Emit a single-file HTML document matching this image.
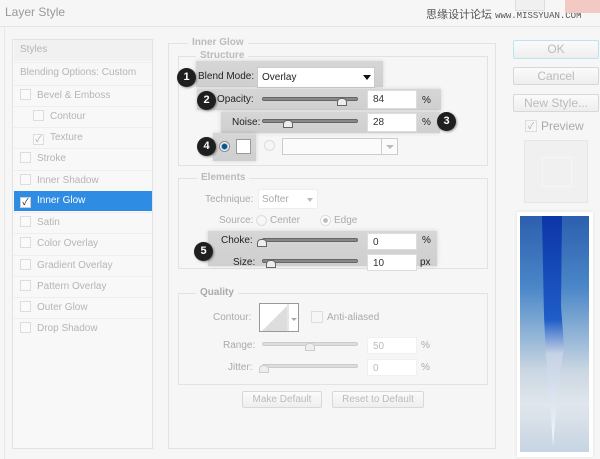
<!DOCTYPE html>
<html><head><meta charset="utf-8"><style>
*{margin:0;padding:0;box-sizing:border-box}
body{width:600px;height:459px;overflow:hidden;background:#f6f6f6;font-family:"Liberation Sans","Noto Sans CJK SC",sans-serif;font-size:10px;color:#aaa;position:relative}
.a{position:absolute}
.t{position:absolute;white-space:nowrap;line-height:12px}
.box{position:absolute;border:1px solid #e2e2e2}
.leg{position:absolute;background:#f6f6f6;padding:0 4px;font-weight:bold;color:#bbb;font-size:10px;line-height:12px}
.row{position:absolute;left:1px;width:138px;height:21px;border-top:1px solid #eee;line-height:20px;padding-left:6px;color:#b5b5b5}
.cb{display:inline-block;width:11px;height:11px;border:1px solid #ddd;background:#fafafa;vertical-align:-2px;margin-right:6px;font-size:9px;line-height:9px;text-align:center;color:#aaa}
.hl{position:absolute;background:linear-gradient(#d6d6d6,#cfcfcf);box-shadow:0 0 4px rgba(0,0,0,.15)}
.badge{position:absolute;width:19px;height:19px;border-radius:50%;background:#1f1f1f;color:#fff;font-weight:bold;font-size:11px;text-align:center;line-height:19px;box-shadow:1px 1px 2px rgba(0,0,0,.4)}
.sl{position:absolute;height:4px;border-radius:2px;background:#888;border:1px solid #666}
.sl.d{background:#ddd;border-color:#ccc}
.th{position:absolute;width:10px;height:8px;border:1px solid #666;border-radius:4px 4px 0 0;background:#eee}
.th.d{border-color:#ccc}
.inp{position:absolute;background:#fff;border:1px solid #ddd;color:#333;padding-left:5px;line-height:17px;font-size:10px}
.btn{position:absolute;border:1px solid #d8d8d8;border-radius:2px;background:linear-gradient(#fbfbfb,#eee);color:#bbb;text-align:center}
.lb{color:#222}
</style></head><body>
<div class="t" style="left:5px;top:5px;font-size:12px;color:#999;line-height:14px">Layer Style</div>
<div class="t" style="left:426px;top:9px;font-size:11px;color:#555">思缘设计论坛 <span style="font-size:9px;font-family:'Liberation Mono',monospace">www.MISSYUAN.COM</span></div>
<div class="a" style="left:515px;top:0;width:30px;height:11px;border:1px solid #ddd;border-top:none;background:#f0f0f0"></div>
<div class="a" style="left:565px;top:0;width:35px;height:13px;background:#f3c9c4"></div>
<div class="a" style="left:0;top:26px;width:600px;height:1px;background:#e4e4e4"></div>
<div class="a" style="left:4px;top:27px;width:1px;height:432px;background:#e8e8e8"></div>

<!-- left panel -->
<div class="box" style="left:12px;top:39px;width:141px;height:410px;background:#f8f8f8">
 <div class="row" style="top:0;border:none;background:#f1f1f1">Styles</div>
 <div class="row" style="top:22px;background:#f7f7f7">Blending Options: Custom</div>
 <div class="row" style="top:45px"><span class="cb"></span>Bevel &amp; Emboss</div>
 <div class="row" style="top:66px;padding-left:19px"><span class="cb"></span>Contour</div>
 <div class="row" style="top:87px;padding-left:19px"><span class="cb">✓</span>Texture</div>
 <div class="row" style="top:108px"><span class="cb"></span>Stroke</div>
 <div class="row" style="top:130px"><span class="cb"></span>Inner Shadow</div>
 <div class="row" style="top:151px;background:#2f8ce3;color:#fff;border:none;height:20px"><span class="cb" style="background:#fff;color:#113;border-color:#ccc">✓</span>Inner Glow</div>
 <div class="row" style="top:172px"><span class="cb"></span>Satin</div>
 <div class="row" style="top:193px"><span class="cb"></span>Color Overlay</div>
 <div class="row" style="top:215px"><span class="cb"></span>Gradient Overlay</div>
 <div class="row" style="top:236px"><span class="cb"></span>Pattern Overlay</div>
 <div class="row" style="top:257px"><span class="cb"></span>Outer Glow</div>
 <div class="row" style="top:278px"><span class="cb"></span>Drop Shadow</div>
</div>

<!-- main -->
<div class="box" style="left:168px;top:43px;width:328px;height:406px"></div>
<div class="leg" style="left:188px;top:37px">Inner Glow</div>
<div class="box" style="left:178px;top:56px;width:310px;height:110px"></div>
<div class="leg" style="left:196px;top:50px">Structure</div>

<div class="hl" style="left:196px;top:61px;width:187px;height:26px"></div>
<div class="t lb" style="left:198px;top:71px">Blend Mode:</div>
<div class="a" style="left:257px;top:67px;width:118px;height:21px;background:#fff;border:1px solid #ccc"></div>
<div class="t lb" style="left:262px;top:72px">Overlay</div>
<div class="a" style="left:363px;top:75px;border:4px solid transparent;border-top:5px solid #111"></div>
<div class="badge" style="left:177px;top:68px">1</div>

<div class="hl" style="left:197px;top:89px;width:244px;height:21px"></div>
<div class="t lb" style="left:217px;top:94px">Opacity:</div>
<div class="sl" style="left:262px;top:97px;width:96px"></div>
<div class="th" style="left:337px;top:98px"></div>
<div class="inp" style="left:367px;top:90px;width:50px;height:19px">84</div>
<div class="t lb" style="left:422px;top:95px">%</div>
<div class="badge" style="left:197px;top:91px">2</div>

<div class="hl" style="left:221px;top:112px;width:219px;height:21px"></div>
<div class="t lb" style="left:232px;top:117px">Noise:</div>
<div class="sl" style="left:262px;top:119px;width:96px"></div>
<div class="th" style="left:283px;top:120px"></div>
<div class="inp" style="left:367px;top:113px;width:50px;height:19px">28</div>
<div class="t lb" style="left:422px;top:117px">%</div>
<div class="badge" style="left:437px;top:112px">3</div>

<div class="hl" style="left:213px;top:133px;width:43px;height:28px"></div>
<div class="a" style="left:219px;top:141px;width:11px;height:11px;border-radius:50%;background:radial-gradient(#0a4f8f 35%,#7ab 45%,#fff 60%);border:1px solid #889"></div>
<div class="a" style="left:236px;top:139px;width:15px;height:15px;background:#fff;border:1px solid #999"></div>
<div class="badge" style="left:197px;top:137px">4</div>
<div class="a" style="left:264px;top:140px;width:11px;height:11px;border-radius:50%;border:1px solid #ddd"></div>
<div class="a" style="left:282px;top:138px;width:116px;height:17px;border:1px solid #ccc;background:#fbfbfb"></div>
<div class="a" style="left:381px;top:138px;width:1px;height:17px;background:#ccc"></div>
<div class="a" style="left:386px;top:145px;border:4px solid transparent;border-top:4px solid #bbb"></div>

<div class="box" style="left:178px;top:178px;width:310px;height:91px"></div>
<div class="leg" style="left:197px;top:172px">Elements</div>
<div class="t" style="left:205px;top:194px">Technique:</div>
<div class="a" style="left:258px;top:189px;width:60px;height:20px;background:#fff;border:1px solid #eee"></div>
<div class="t" style="left:262px;top:194px">Softer</div>
<div class="a" style="left:307px;top:198px;border:3px solid transparent;border-top:4px solid #bbb"></div>
<div class="t" style="left:219px;top:215px">Source:</div>
<div class="a" style="left:256px;top:215px;width:11px;height:11px;border-radius:50%;border:1px solid #ddd"></div>
<div class="t" style="left:270px;top:215px">Center</div>
<div class="a" style="left:320px;top:215px;width:11px;height:11px;border-radius:50%;border:1px solid #ddd;background:radial-gradient(#bbb 30%,#fff 45%)"></div>
<div class="t" style="left:334px;top:215px">Edge</div>

<div class="hl" style="left:208px;top:231px;width:229px;height:35px"></div>
<div class="t lb" style="left:221px;top:235px">Choke:</div>
<div class="sl" style="left:262px;top:238px;width:96px"></div>
<div class="th" style="left:257px;top:239px"></div>
<div class="inp" style="left:367px;top:233px;width:50px;height:17px">0</div>
<div class="t lb" style="left:422px;top:235px">%</div>
<div class="t lb" style="left:233px;top:257px">Size:</div>
<div class="sl" style="left:262px;top:259px;width:96px"></div>
<div class="th" style="left:266px;top:260px"></div>
<div class="inp" style="left:367px;top:254px;width:50px;height:17px">10</div>
<div class="t lb" style="left:420px;top:257px">px</div>
<div class="badge" style="left:194px;top:242px">5</div>

<div class="box" style="left:178px;top:293px;width:310px;height:92px"></div>
<div class="leg" style="left:196px;top:287px;color:#aaa">Quality</div>
<div class="t" style="left:213px;top:312px">Contour:</div>
<div class="a" style="left:259px;top:303px;width:40px;height:29px;border:1px solid #999;background:#fff;overflow:hidden">
<svg width="40" height="29"><polygon points="2,27 27,2 27,27" fill="#ddd"/><line x1="28" y1="0" x2="28" y2="29" stroke="#ccc"/><path d="M31 14l3 3 3-3z" fill="#aaa"/></svg></div>
<div class="a" style="left:311px;top:311px;width:12px;height:12px;border:1px solid #ddd"></div>
<div class="t" style="left:327px;top:312px">Anti-aliased</div>
<div class="t" style="left:223px;top:340px">Range:</div>
<div class="sl d" style="left:262px;top:342px;width:96px"></div>
<div class="th d" style="left:305px;top:343px"></div>
<div class="inp" style="left:367px;top:337px;width:50px;height:17px;color:#bbb;border-color:#f0f0f0">50</div>
<div class="t" style="left:421px;top:340px">%</div>
<div class="t" style="left:228px;top:362px">Jitter:</div>
<div class="sl d" style="left:262px;top:364px;width:96px"></div>
<div class="th d" style="left:259px;top:365px"></div>
<div class="inp" style="left:367px;top:359px;width:50px;height:17px;color:#bbb;border-color:#f0f0f0">0</div>
<div class="t" style="left:421px;top:362px">%</div>
<div class="btn" style="left:242px;top:391px;width:80px;height:17px;line-height:15px">Make Default</div>
<div class="btn" style="left:332px;top:391px;width:92px;height:17px;line-height:15px">Reset to Default</div>

<!-- right -->
<div class="btn" style="left:513px;top:40px;width:86px;height:19px;line-height:17px;font-size:12px;border-color:#bfe3ee">OK</div>
<div class="btn" style="left:513px;top:67px;width:86px;height:18px;line-height:16px;font-size:12px">Cancel</div>
<div class="btn" style="left:513px;top:94px;width:86px;height:18px;line-height:16px;font-size:12px">New Style...</div>
<div class="a" style="left:525px;top:120px;width:12px;height:12px;border:1px solid #ddd;font-size:9px;line-height:10px;text-align:center">✓</div>
<div class="t" style="left:541px;top:120px;font-size:12px;line-height:13px">Preview</div>
<div class="a" style="left:524px;top:140px;width:64px;height:63px;border:1px solid #e6e6e6;background:#f0f0f0"><div class="a" style="left:17px;top:16px;width:30px;height:30px;border:1px solid #f6f6f6"></div></div>
<div class="a" style="left:517px;top:212px;width:76px;height:245px;background:#fff;box-shadow:0 0 3px #e0e0e0"></div>
<div class="a" style="left:520px;top:216px;width:69px;height:236px;overflow:hidden;background:linear-gradient(#2c5fae 0%,#4a86c8 30%,#8fb3d6 50%,#c9d6e2 65%,#e1e6ec 80%,#c6d4e3 100%)">
<svg width="69" height="236"><defs><linearGradient id="g" x1="0" y1="0" x2="0" y2="1"><stop offset="0" stop-color="#0c35a8"/><stop offset=".45" stop-color="#1f5dc8"/><stop offset=".6" stop-color="#c5d3e5"/><stop offset="1" stop-color="#f4f6f9"/></linearGradient></defs><path d="M22 0 L42 0 L41 90 L44 130 L38 175 L33 230 L30 185 L26 140 L24 100 Z" fill="url(#g)"/></svg></div>
</body></html>
